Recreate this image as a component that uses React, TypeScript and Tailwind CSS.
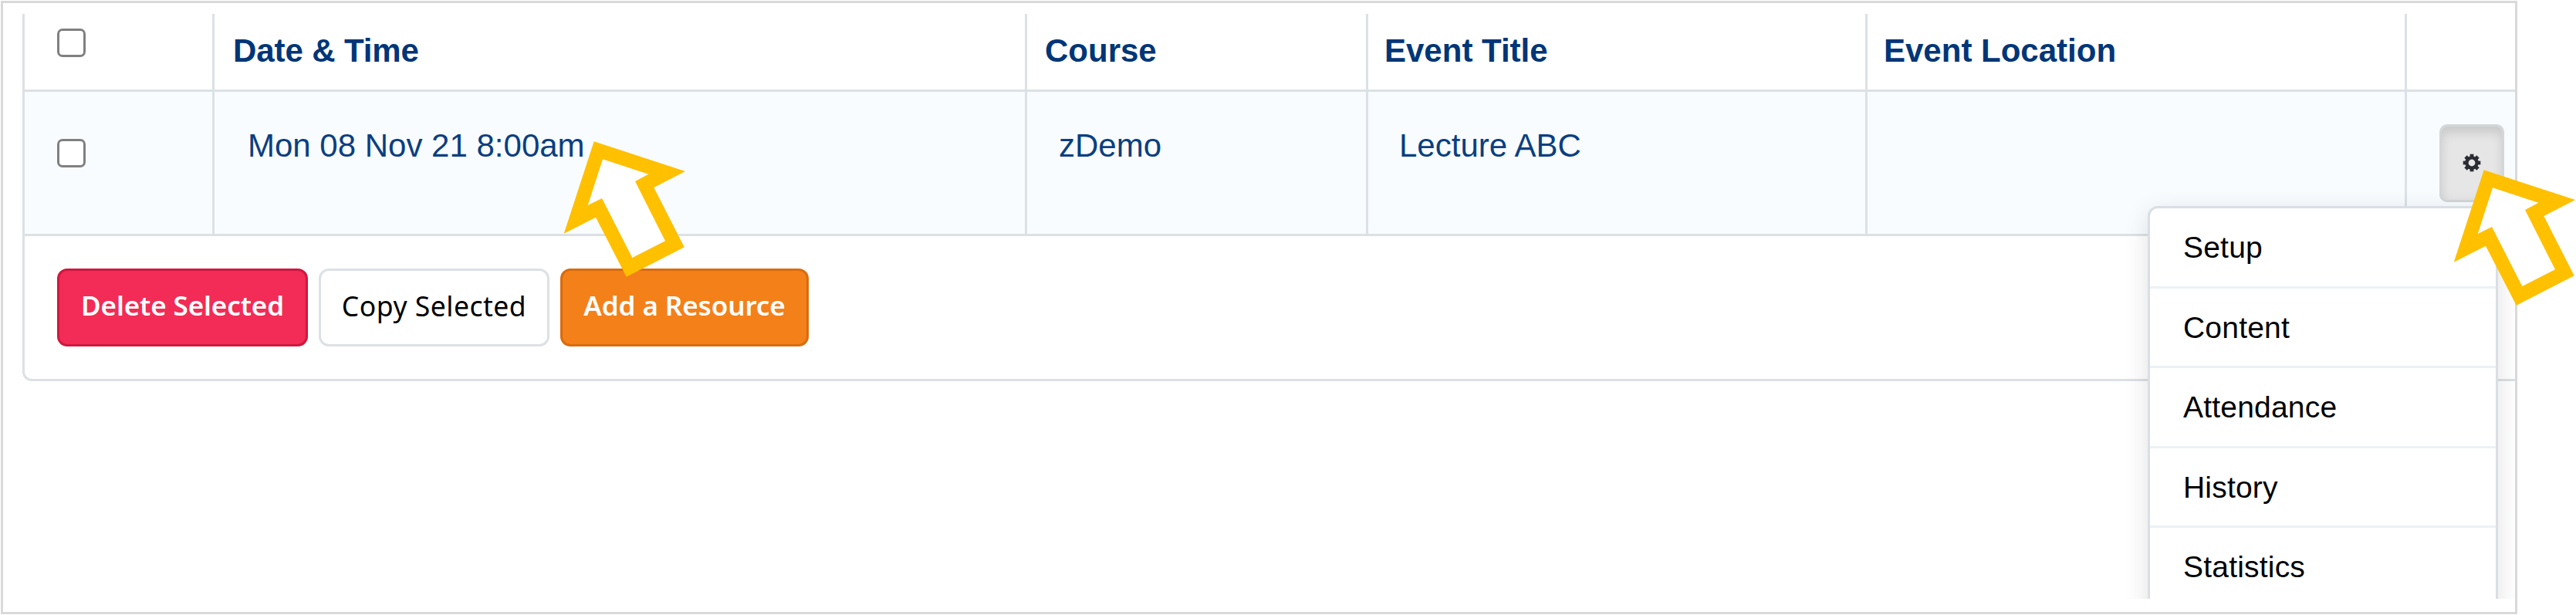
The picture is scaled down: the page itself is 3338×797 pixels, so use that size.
const MENU_ITEMS = ['Setup', 'Content', 'Attendance', 'History', 'Statistics']

const HEADINGS = [
  { label: 'Date & Time', className: 'pl-[24px] tracking-[-0.1px]' },
  { label: 'Course', className: 'pl-[23px]' },
  { label: 'Event Title', className: 'pl-[21px]' },
  { label: 'Event Location', className: 'pl-[21px]' },
]

const VALUES = [
  { label: 'Mon 08 Nov 21 8:00am', className: 'pl-[43px]' },
  { label: 'zDemo', className: 'pl-[41px]' },
  { label: 'Lecture ABC', className: 'pl-[40px]' },
  { label: '', className: '' },
]

const COLUMNS = 'grid grid-cols-[246px_1053px_442px_647px_699px_140px] border-b-[3px] border-[#dce1e5]'

function Checkbox() {
  return (
    <input
      type="checkbox"
      className="block size-[37px] appearance-none rounded-[7px] border-[3px] border-[#808080] bg-white"
    />
  )
}

function Gear() {
  return (
    <svg viewBox="-12 -12 24 24" className="mb-[2px] size-6">
      {[0, 45, 90, 135].map((a) => (
        <rect key={a} x="-2.4" y="-11.3" width="4.8" height="22.6" fill="#2b2b33" transform={`rotate(${a})`} />
      ))}
      <circle r="6.6" fill="#e6e6e6" stroke="#2b2b33" strokeWidth="4.4" />
    </svg>
  )
}

function Arrow({ className }: { className: string }) {
  return (
    <svg viewBox="0 0 160 178" className={`absolute h-[178px] w-[160px] ${className}`}>
      <path
        d="M39.7 2.3 158 41 117.3 62 156.7 139.3 81.7 177.7 42 100.7 .7 121.7Z"
        fill="#ffc000"
      />
      <path d="M51 25.3 110.3 44.7 93 54 132 131.3 89.3 153 50 76 31.7 85Z" fill="#fff" />
    </svg>
  )
}

function ActionMenu() {
  return (
    <ul className="absolute top-[263px] left-[2779px] w-[454px] rounded-[13px] border-[3px] border-[#d9dfe4] bg-white pb-20 text-[39px] tracking-[0.2px] text-black shadow-[0_8px_32px_rgba(0,0,0,0.12)]">
      {MENU_ITEMS.map((item) => (
        <li key={item} className="h-[103.6px] border-b-[3px] border-[#ecf1f4] pl-[43px] leading-[101px]">
          {item}
        </li>
      ))}
    </ul>
  )
}

export default function App() {
  return (
    <div className="relative h-[797px] w-[3338px] overflow-hidden bg-white pt-px pl-px font-['Liberation_Sans',Arial,sans-serif]">
      <div className="h-[795px] w-[3261px] border-[3px] border-[#d9d9d9]">
        <div className="relative h-[772px] overflow-hidden pt-[14px] pl-[25px]">
          <div className="overflow-hidden rounded-bl-[12px] border-b-[3px] border-l-[3px] border-[#dce1e5]">
            <div className={`${COLUMNS} h-[101px]`}>
              <div className="border-r-[3px] border-[#dce1e5] pt-[19px] pl-[42px]">
                <Checkbox />
              </div>
              {HEADINGS.map((h) => (
                <div
                  key={h.label}
                  className={`border-r-[3px] border-[#dce1e5] pt-[24px] text-[42px] leading-[48px] font-bold text-[#003677] ${h.className}`}
                >
                  {h.label}
                </div>
              ))}
              <div />
            </div>

            <div className={`${COLUMNS} h-[187px] bg-[#f8fcff]`}>
              <div className="border-r-[3px] border-[#dce1e5] pt-[61px] pl-[42px]">
                <Checkbox />
              </div>
              {VALUES.map((v, i) => (
                <div
                  key={i}
                  className={`border-r-[3px] border-[#dce1e5] pt-[46px] text-[42px] leading-[48px] text-[#0b3f80] ${v.className}`}
                >
                  {v.label}
                </div>
              ))}
              <div className="pt-[42px] pl-[42px]">
                <button className="flex h-[101px] w-[84px] items-center justify-center rounded-[10px] border-[3px] border-[#d3d7da] bg-[#e6e6e6] shadow-[inset_0_8px_13px_rgba(0,0,0,0.125)]">
                  <Gear />
                </button>
              </div>
            </div>

            {/* Bulk actions */}
            <div className="flex h-[185px] gap-[14px] pt-[42px] pl-[42px] font-['Noto_Sans',sans-serif] text-[35.5px] whitespace-nowrap">
              <button className="h-[101px] w-[325px] rounded-[13px] border-[3px] border-[#d01840] bg-[#f22c56] pb-1 text-[35px] font-semibold tracking-[-0.1px] text-white">
                Delete Selected
              </button>
              <button className="h-[101px] w-[299px] rounded-[13px] border-[3px] border-[#dce1e5] bg-white pb-1 tracking-[0.5px] text-black">
                Copy Selected
              </button>
              <button className="h-[101px] w-[322px] rounded-[13px] border-[3px] border-[#d96c0d] bg-[#f4801a] pb-1 text-[35px] font-semibold tracking-[-0.1px] text-white">
                Add a Resource
              </button>
            </div>
          </div>

          <ActionMenu />
        </div>
      </div>

      <Arrow className="top-[181px] left-[730px]" />
      <Arrow className="top-[218px] left-[3179px]" />
    </div>
  )
}
